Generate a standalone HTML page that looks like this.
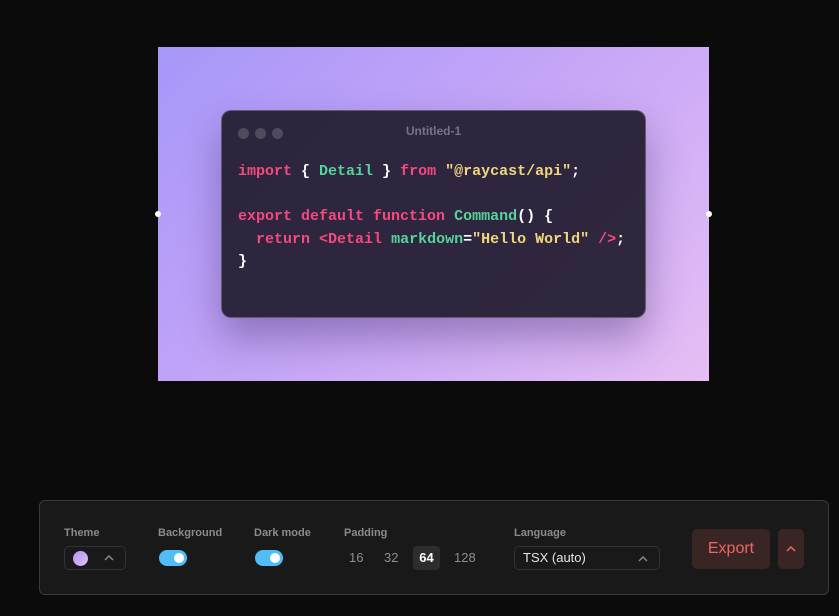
<!DOCTYPE html>
<html><head><meta charset="utf-8"><style>
*{margin:0;padding:0;box-sizing:border-box}
body{width:839px;height:616px;background:#0b0b0b;position:relative;overflow:hidden;font-family:"Liberation Sans",sans-serif}
.frame{position:absolute;left:158px;top:47px;width:551px;height:334px;background:linear-gradient(135deg,#a797f9 0%,#c6a6f7 50%,#e6bef4 100%)}
.h{position:absolute;width:6px;height:6px;border-radius:50%;background:#fff;top:211px}
.win{position:absolute;left:221px;top:110px;width:425px;height:208px;background:rgba(36,30,50,0.94);border:1px solid rgba(255,255,255,0.25);border-radius:10px;box-shadow:0 20px 40px rgba(40,20,80,0.35)}
.dot{position:absolute;top:17px;width:11px;height:11px;border-radius:50%;background:#504a5c}
.title{position:absolute;top:13px;left:0;right:0;text-align:center;color:#77728a;font-size:12px;font-weight:bold}
pre{position:absolute;left:16px;top:50px;font-family:"Liberation Mono",monospace;font-size:15px;line-height:22.5px;color:#fff;font-weight:bold}
.k{color:#f5497f}.g{color:#56d39a}.y{color:#f1d77c}
.panel{position:absolute;left:39px;top:500px;width:790px;height:95px;background:#191919;border:1px solid #3a3a3a;border-radius:6px}
.lbl{position:absolute;top:26px;color:#8b8b8b;font-size:11px;font-weight:bold}
.tog{position:absolute;top:49px;width:28px;height:16px;border-radius:8px;background:#4fbdf8}
.tog::after{content:"";position:absolute;right:3px;top:3px;width:10px;height:10px;border-radius:50%;background:#fff}
.pad{position:absolute;top:45px;color:#8e8e8e;font-size:13px;height:24px;line-height:24px}
</style></head><body>
<div class="frame"></div>
<div class="h" style="left:155px"></div><div class="h" style="left:706px"></div>
<div class="win">
<div class="dot" style="left:16px"></div><div class="dot" style="left:33px"></div><div class="dot" style="left:50px"></div>
<div class="title">Untitled-1</div>
<pre><span class="k">import</span> { <span class="g">Detail</span> } <span class="k">from</span> <span class="y">"@raycast/api"</span>;

<span class="k">export default function</span> <span class="g">Command</span>() {
  <span class="k">return &lt;Detail</span> <span class="g">markdown</span>=<span class="y">"Hello World"</span> <span class="k">/&gt;</span>;
}</pre>
</div>
<div class="panel">
<div class="lbl" style="left:24px">Theme</div>
<div style="position:absolute;left:24px;top:45px;width:62px;height:24px;border:1px solid #333;border-radius:5px">
<div style="position:absolute;left:8px;top:4px;width:15px;height:15px;border-radius:50%;background:linear-gradient(135deg,#a797f9,#e6bef4)"></div>
<svg style="position:absolute;left:38px;top:6px" width="12" height="10"><path d="M2 7L6 3L10 7" stroke="#888" stroke-width="1.5" fill="none"/></svg></div>
<div class="lbl" style="left:118px">Background</div>
<div class="tog" style="left:119px"></div>
<div class="lbl" style="left:214px">Dark mode</div>
<div class="tog" style="left:215px"></div>
<div class="lbl" style="left:304px">Padding</div>
<div class="pad" style="left:309px">16</div>
<div class="pad" style="left:344px">32</div>
<div class="pad" style="left:373px;width:27px;text-align:center;background:#2d2d2d;border-radius:4px;color:#fff;font-weight:bold">64</div>
<div class="pad" style="left:414px">128</div>
<div class="lbl" style="left:474px">Language</div>
<div style="position:absolute;left:474px;top:45px;width:146px;height:24px;border:1px solid #333;border-radius:5px;color:#e6e6e6;font-size:13px;line-height:22px;padding-left:8px">TSX (auto)
<svg style="position:absolute;left:122px;top:7px" width="12" height="10"><path d="M2 7L6 3L10 7" stroke="#888" stroke-width="1.5" fill="none"/></svg></div>
<div style="position:absolute;left:652px;top:28px;width:78px;height:40px;background:#3a2525;border-radius:5px;color:#f06565;font-size:16px;text-align:center;line-height:40px">Export</div>
<div style="position:absolute;left:738px;top:28px;width:26px;height:40px;background:#3a2525;border-radius:5px">
<svg style="position:absolute;left:7px;top:15px" width="12" height="10"><path d="M2 7L6 3L10 7" stroke="#f06565" stroke-width="1.5" fill="none"/></svg></div>
</div>
</body></html>
